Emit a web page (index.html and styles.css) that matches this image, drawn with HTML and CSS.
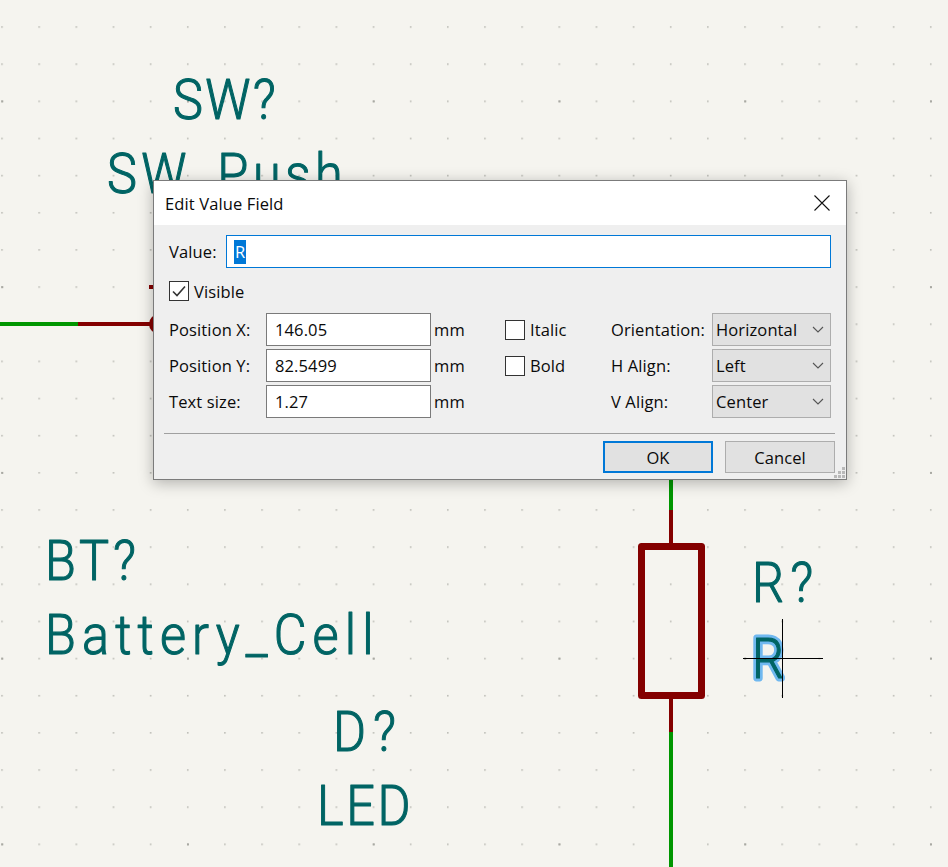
FILE: index.html
```html
<!DOCTYPE html>
<html lang="en">
<head>
    <meta charset="UTF-8">
    <title>Edit Value Field</title>
    <link rel="stylesheet" href="styles.css">
</head>
<body>
    <div class="schematic">
        <svg class="sheet" width="948" height="867" viewBox="0 0 948 867">
            <defs>
                <pattern id="grid" x="1.2" y="26.2" width="37.15" height="37.15" patternUnits="userSpaceOnUse">
                    <rect width="1.6" height="1.6" class="dot"></rect>
                </pattern>
                <pattern id="gridMajor" x="187" y="100.4" width="185.75" height="185.75" patternUnits="userSpaceOnUse">
                    <rect width="2" height="2" class="dot-major"></rect>
                </pattern>
            </defs>
            <rect width="948" height="867" fill="url(#grid)"></rect>
            <rect width="948" height="867" fill="url(#gridMajor)"></rect>

            <!-- wires -->
            <path class="wire" d="M0 324H78"></path>
            <path class="pin" d="M78 324H152"></path>
            <path class="pin" d="M149 287H160"></path>
            <circle class="pin" cx="159" cy="324" r="8"></circle>
            <path class="wire" d="M671 470V510"></path>
            <path class="pin" d="M671 510V546"></path>
            <rect class="body" x="641.5" y="546.5" width="60" height="149"></rect>
            <path class="pin" d="M671 696V732"></path>
            <path class="wire" d="M671 732V867"></path>

            <!-- field labels -->
            <text class="label" x="173" y="119" textLength="114">SW?</text>
            <text class="label" x="107" y="193" textLength="262">SW_Push</text>
            <text class="label" x="45" y="580" textLength="101">BT?</text>
            <text class="label" x="45" y="654" textLength="365">Battery_Cell</text>
            <text class="label" x="333" y="751" textLength="70">D?</text>
            <text class="label" x="317" y="825" textLength="104">LED</text>
            <text class="label" x="752" y="602" textLength="68">R?</text>
            <text class="label selected" x="752" y="678">R</text>
            <text class="label" x="752" y="678">R</text>

            <!-- cursor -->
            <path class="cursor" d="M743 658.5H823M782.5 619V698"></path>
        </svg>

        <div class="dialog">
            <div class="title-bar">
                <span>Edit Value Field</span>
                <svg class="close" width="16" height="16" viewBox="0 0 16 16">
                    <path d="M0.5 0.5L15.5 15.5M15.5 0.5L0.5 15.5"></path>
                </svg>
            </div>
            <div class="content">
                <div class="value-row">
                    <label>Value:</label>
                    <div class="input focused"><span class="selection">R</span></div>
                </div>
                <div class="check-row visible-row">
                    <span class="check">
                        <svg width="14" height="12" viewBox="0 0 14 12"><path d="M1 6.5L5 10.5L13 1.5"></path></svg>
                    </span>
                    <label>Visible</label>
                </div>
                <div class="fields">
                    <div class="position-grid">
                        <label>Position X:</label>
                        <div class="input">146.05</div>
                        <span class="unit">mm</span>
                        <label>Position Y:</label>
                        <div class="input">82.5499</div>
                        <span class="unit">mm</span>
                        <label>Text size:</label>
                        <div class="input">1.27</div>
                        <span class="unit">mm</span>
                    </div>
                    <div class="style-grid">
                        <div class="check-row"><span class="check"></span><label>Italic</label></div>
                        <div class="check-row"><span class="check"></span><label>Bold</label></div>
                    </div>
                    <div class="align-grid">
                        <label>Orientation:</label>
                        <div class="combo">Horizontal<svg width="12" height="7" viewBox="0 0 12 7"><path d="M1 1L6 6L11 1"></path></svg></div>
                        <label>H Align:</label>
                        <div class="combo">Left<svg width="12" height="7" viewBox="0 0 12 7"><path d="M1 1L6 6L11 1"></path></svg></div>
                        <label>V Align:</label>
                        <div class="combo">Center<svg width="12" height="7" viewBox="0 0 12 7"><path d="M1 1L6 6L11 1"></path></svg></div>
                    </div>
                </div>
                <div class="separator"></div>
                <div class="buttons">
                    <button class="default" type="button">OK</button>
                    <button type="button">Cancel</button>
                </div>
            </div>
            <svg class="grip" width="13" height="13" viewBox="0 0 13 13">
                <rect x="9" y="1" width="3" height="3"></rect>
                <rect x="5" y="5" width="3" height="3"></rect>
                <rect x="9" y="5" width="3" height="3"></rect>
                <rect x="1" y="9" width="3" height="3"></rect>
                <rect x="5" y="9" width="3" height="3"></rect>
                <rect x="9" y="9" width="3" height="3"></rect>
            </svg>
        </div>
    </div>
</body>
</html>
```

FILE: styles.css
```css
html, body {
    margin: 0;
    padding: 0;
}

body {
    width: 948px;
    height: 867px;
    overflow: hidden;
    font-family: "Open Sans", "Noto Sans", sans-serif;
}

.schematic {
    position: relative;
    width: 948px;
    height: 867px;
    background-color: #f5f4ef;
}

.sheet {
    display: block;
}

.dot {
    fill: #bdbdb7;
}

.dot-major {
    fill: #a9a9a3;
}

.wire {
    fill: none;
    stroke: #009600;
    stroke-width: 4px;
}

.pin {
    fill: none;
    stroke: #840000;
    stroke-width: 4px;
}

.body {
    fill: none;
    stroke: #840000;
    stroke-width: 7px;
    stroke-linejoin: round;
}

.label {
    font-family: "Roboto", sans-serif;
    font-weight: 300;
    font-size: 56px;
    fill: #006464;
    stroke: #006464;
    stroke-width: 1.1px;
    stroke-linejoin: round;
    transform-box: fill-box;
    transform-origin: left center;
    transform: scaleX(0.9);
}

.selected {
    stroke: #70b8f0;
    stroke-width: 7px;
    fill: #70b8f0;
}

.cursor {
    fill: none;
    stroke: #000;
    stroke-width: 1px;
}

/* dialog window */
.dialog {
    position: absolute;
    left: 153px;
    top: 180px;
    width: 694px;
    height: 300px;
    box-sizing: border-box;
    border: 1px solid #7b7b7b;
    background-color: #efefef;
    box-shadow: 0 3px 14px rgba(0, 0, 0, 0.28);
    font-size: 16.5px;
    letter-spacing: 0.12px;
    color: #0a0a0a;
}

.title-bar {
    display: flex;
    align-items: center;
    justify-content: space-between;
    height: 44px;
    padding: 0 16px 0 11px;
    background-color: #fff;
}

.close {
    display: block;
}

.close path {
    fill: none;
    stroke: #111;
    stroke-width: 1.1px;
}

.content {
    padding: 10px 11px 0 10px;
}

.value-row {
    display: flex;
    align-items: center;
    padding-left: 5px;
    padding-right: 4px;
}

.value-row label {
    width: 57px;
}

.value-row .input {
    flex: 1;
}

.input {
    box-sizing: border-box;
    display: flex;
    align-items: center;
    height: 33px;
    padding-left: 8px;
    border: 1px solid #7a7a7a;
    background-color: #fff;
}

.input.focused {
    border-color: #0078d7;
    padding-left: 7px;
}

.selection {
    background-color: #0078d7;
    color: #fff;
    padding: 0 1px;
    line-height: 24px;
}

.check-row {
    display: flex;
    align-items: center;
    gap: 5px;
    height: 20px;
}

.visible-row {
    margin-top: 13px;
    padding-left: 5px;
}

.check {
    box-sizing: border-box;
    display: flex;
    align-items: center;
    justify-content: center;
    width: 20px;
    height: 20px;
    border: 1px solid #333;
    background-color: #fff;
}

.check path {
    fill: none;
    stroke: #333;
    stroke-width: 1.6px;
}

.fields {
    display: flex;
    margin-top: 12px;
    padding-left: 5px;
}

.position-grid {
    display: grid;
    grid-template-columns: 97px 165px 74px;
    grid-auto-rows: 33px;
    row-gap: 3px;
    align-items: center;
}

.unit {
    padding-left: 3px;
}

.style-grid {
    display: grid;
    grid-auto-rows: 33px;
    row-gap: 3px;
    align-items: center;
    width: 106px;
}

.align-grid {
    display: grid;
    grid-template-columns: 101px 119px;
    grid-auto-rows: 33px;
    row-gap: 3px;
    align-items: center;
}

.combo {
    box-sizing: border-box;
    display: flex;
    align-items: center;
    justify-content: space-between;
    height: 33px;
    padding: 0 6px 0 3px;
    border: 1px solid #adadad;
    background-color: #e1e1e1;
}

.combo path {
    fill: none;
    stroke: #555;
    stroke-width: 1.1px;
}

.separator {
    height: 1px;
    margin-top: 15px;
    background-color: #a0a0a0;
}

.buttons {
    display: flex;
    justify-content: flex-end;
    gap: 12px;
    margin-top: 7px;
}

button {
    box-sizing: border-box;
    width: 110px;
    height: 32px;
    padding: 0;
    border: 1px solid #adadad;
    background-color: #e1e1e1;
    font-family: inherit;
    font-size: 16.5px;
    letter-spacing: 0.12px;
    color: #0a0a0a;
}

button.default {
    border: 2px solid #0078d7;
}

.grip {
    position: absolute;
    right: 0;
    bottom: 0;
}

.grip rect {
    fill: #b9b9b9;
}
```
